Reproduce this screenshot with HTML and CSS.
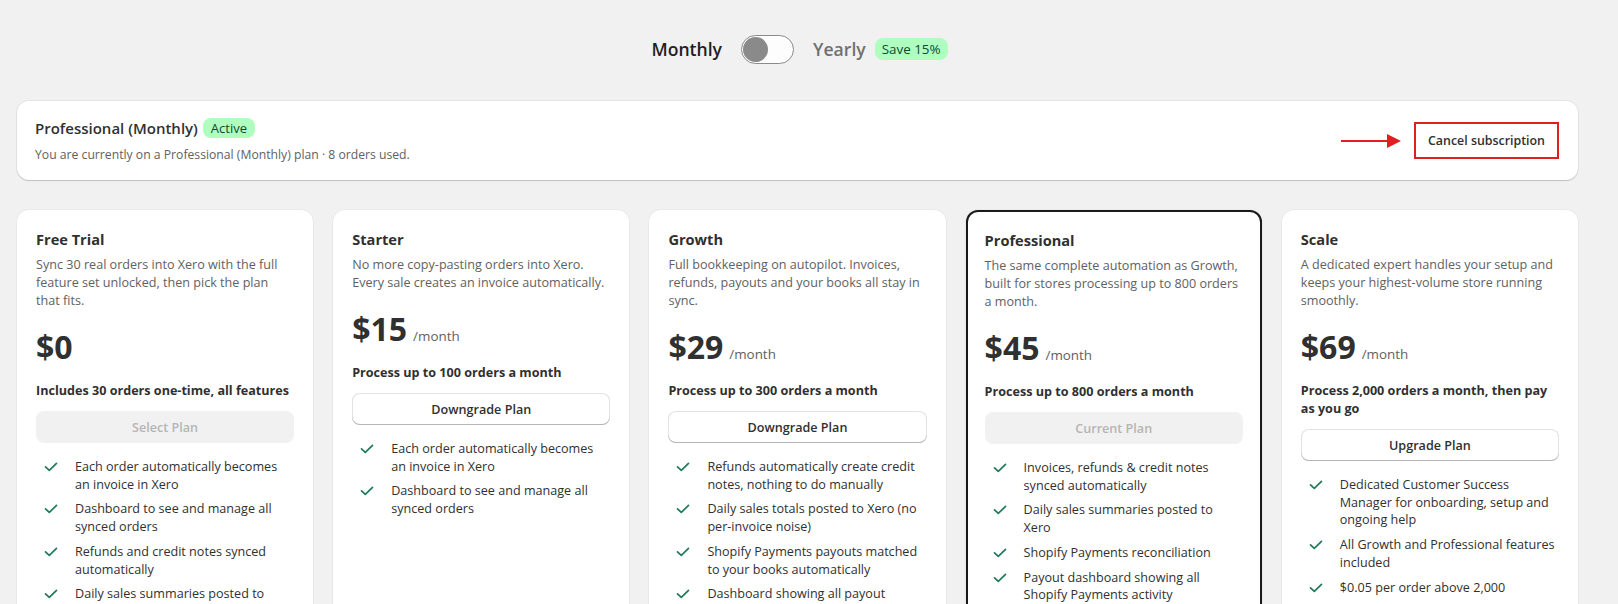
FILE: index.html
```html
<!DOCTYPE html>
<html lang="en">
<head>
    <meta charset="UTF-8">
    <meta name="viewport" content="width=device-width, initial-scale=1.0">
    <title>Plans</title>
    <link rel="stylesheet" href="styles.css">
</head>
<body>
    <div class="page">
        <div class="billing-toggle">
            <span class="period active">Monthly</span>
            <span class="switch"><span class="knob"></span></span>
            <span class="period">Yearly</span>
            <span class="save">Save 15%</span>
        </div>

        <div class="current-plan">
            <div class="current-info">
                <div class="current-title">
                    Professional (Monthly)
                    <span class="badge">Active</span>
                </div>
                <p class="current-sub">You are currently on a Professional (Monthly) plan · 8 orders used.</p>
            </div>
            <div class="current-action">
                <svg class="pointer" width="60" height="16" viewBox="0 0 60 16">
                    <line x1="0" y1="8" x2="48" y2="8" stroke="#e02020" stroke-width="2"/>
                    <polygon points="46,1 60,8 46,15" fill="#e02020"/>
                </svg>
                <button class="cancel-btn">Cancel subscription</button>
            </div>
        </div>

        <div class="plans">
            <div class="plan">
                <h3>Free Trial</h3>
                <p class="desc">Sync 30 real orders into Xero with the full feature set unlocked, then pick the plan that fits.</p>
                <div class="price"><span class="amount">$0</span></div>
                <p class="limit">Includes 30 orders one-time, all features</p>
                <button class="btn disabled">Select Plan</button>
                <ul class="features">
                    <li><svg class="check" viewBox="0 0 14 10"><polyline points="1.5,4.8 5.3,8.4 12.5,1.4"/></svg>Each order automatically becomes an invoice in Xero</li>
                    <li><svg class="check" viewBox="0 0 14 10"><polyline points="1.5,4.8 5.3,8.4 12.5,1.4"/></svg>Dashboard to see and manage all synced orders</li>
                    <li><svg class="check" viewBox="0 0 14 10"><polyline points="1.5,4.8 5.3,8.4 12.5,1.4"/></svg>Refunds and credit notes synced automatically</li>
                    <li><svg class="check" viewBox="0 0 14 10"><polyline points="1.5,4.8 5.3,8.4 12.5,1.4"/></svg>Daily sales summaries posted to Xero</li>
                    <li><svg class="check" viewBox="0 0 14 10"><polyline points="1.5,4.8 5.3,8.4 12.5,1.4"/></svg>Shopify Payments reconciliation</li>
                </ul>
            </div>

            <div class="plan">
                <h3>Starter</h3>
                <p class="desc">No more copy-pasting orders into Xero. Every sale creates an invoice automatically.</p>
                <div class="price"><span class="amount">$15</span><span class="per">/month</span></div>
                <p class="limit">Process up to 100 orders a month</p>
                <button class="btn">Downgrade Plan</button>
                <ul class="features">
                    <li><svg class="check" viewBox="0 0 14 10"><polyline points="1.5,4.8 5.3,8.4 12.5,1.4"/></svg>Each order automatically becomes an invoice in Xero</li>
                    <li><svg class="check" viewBox="0 0 14 10"><polyline points="1.5,4.8 5.3,8.4 12.5,1.4"/></svg>Dashboard to see and manage all synced orders</li>
                </ul>
            </div>

            <div class="plan">
                <h3>Growth</h3>
                <p class="desc">Full bookkeeping on autopilot. Invoices, refunds, payouts and your books all stay in sync.</p>
                <div class="price"><span class="amount">$29</span><span class="per">/month</span></div>
                <p class="limit">Process up to 300 orders a month</p>
                <button class="btn">Downgrade Plan</button>
                <ul class="features">
                    <li><svg class="check" viewBox="0 0 14 10"><polyline points="1.5,4.8 5.3,8.4 12.5,1.4"/></svg>Refunds automatically create credit notes, nothing to do manually</li>
                    <li><svg class="check" viewBox="0 0 14 10"><polyline points="1.5,4.8 5.3,8.4 12.5,1.4"/></svg>Daily sales totals posted to Xero (no per-invoice noise)</li>
                    <li><svg class="check" viewBox="0 0 14 10"><polyline points="1.5,4.8 5.3,8.4 12.5,1.4"/></svg>Shopify Payments payouts matched to your books automatically</li>
                    <li><svg class="check" viewBox="0 0 14 10"><polyline points="1.5,4.8 5.3,8.4 12.5,1.4"/></svg>Dashboard showing all payout activity</li>
                </ul>
            </div>

            <div class="plan current">
                <h3>Professional</h3>
                <p class="desc">The same complete automation as Growth, built for stores processing up to 800 orders a month.</p>
                <div class="price"><span class="amount">$45</span><span class="per">/month</span></div>
                <p class="limit">Process up to 800 orders a month</p>
                <button class="btn disabled">Current Plan</button>
                <ul class="features">
                    <li><svg class="check" viewBox="0 0 14 10"><polyline points="1.5,4.8 5.3,8.4 12.5,1.4"/></svg>Invoices, refunds &amp; credit notes synced automatically</li>
                    <li><svg class="check" viewBox="0 0 14 10"><polyline points="1.5,4.8 5.3,8.4 12.5,1.4"/></svg>Daily sales summaries posted to Xero</li>
                    <li><svg class="check" viewBox="0 0 14 10"><polyline points="1.5,4.8 5.3,8.4 12.5,1.4"/></svg>Shopify Payments reconciliation</li>
                    <li><svg class="check" viewBox="0 0 14 10"><polyline points="1.5,4.8 5.3,8.4 12.5,1.4"/></svg>Payout dashboard showing all Shopify Payments activity</li>
                </ul>
            </div>

            <div class="plan">
                <h3>Scale</h3>
                <p class="desc">A dedicated expert handles your setup and keeps your highest-volume store running smoothly.</p>
                <div class="price"><span class="amount">$69</span><span class="per">/month</span></div>
                <p class="limit">Process 2,000 orders a month, then pay as you go</p>
                <button class="btn">Upgrade Plan</button>
                <ul class="features">
                    <li><svg class="check" viewBox="0 0 14 10"><polyline points="1.5,4.8 5.3,8.4 12.5,1.4"/></svg>Dedicated Customer Success Manager for onboarding, setup and ongoing help</li>
                    <li><svg class="check" viewBox="0 0 14 10"><polyline points="1.5,4.8 5.3,8.4 12.5,1.4"/></svg>All Growth and Professional features included</li>
                    <li><svg class="check" viewBox="0 0 14 10"><polyline points="1.5,4.8 5.3,8.4 12.5,1.4"/></svg>$0.05 per order above 2,000</li>
                </ul>
            </div>
        </div>
    </div>
</body>
</html>
```

FILE: styles.css
```css
* {
    margin: 0;
    padding: 0;
    box-sizing: border-box;
}

body {
    font-family: 'Segoe UI', 'Open Sans', sans-serif;
    font-size: 12.6px;
    color: #303030;
    background: #f1f1f1;
}

.page {
    padding: 34px 40px 0 17px;
}

/* monthly / yearly switch */
.billing-toggle {
    display: flex;
    align-items: center;
    justify-content: center;
    height: 30px;
    padding-left: 4px;
}

.period {
    font-size: 17.6px;
    font-weight: 600;
    color: #707070;
}

.period.active {
    color: #1f1f1f;
}

.switch {
    width: 53px;
    height: 29px;
    margin: 0 19px;
    border: 1px solid #8a8a8a;
    border-radius: 15px;
    background: #fdfdfd;
    padding: 1px;
    display: flex;
    align-items: center;
}

.knob {
    width: 25px;
    height: 25px;
    border-radius: 50%;
    background: #8a8a8a;
}

.save {
    margin-left: 9px;
    padding: 2px 7px;
    font-size: 13.4px;
    color: #0c4a33;
    background: #affebf;
    border-radius: 8px;
}

/* current subscription banner */
.current-plan {
    margin-top: 37px;
    background: white;
    border-radius: 12px;
    box-shadow: 0 1px 1px rgba(0, 0, 0, 0.16), 0 0 0 1px rgba(0, 0, 0, 0.05);
    height: 79px;
    padding: 0 19px 0 18px;
    display: flex;
    align-items: center;
    justify-content: space-between;
}

.current-title {
    font-size: 15px;
    font-weight: 600;
    display: flex;
    align-items: center;
}

.badge {
    margin-left: 5px;
    padding: 1px 8px;
    font-size: 13px;
    font-weight: 400;
    color: #0c4a33;
    background: #affebf;
    border-radius: 8px;
}

.current-sub {
    margin-top: 8px;
    font-size: 12.2px;
    color: #616161;
}

.current-action {
    display: flex;
    align-items: center;
}

.pointer {
    margin-right: 13px;
}

.cancel-btn {
    font: inherit;
    font-size: 12.4px;
    font-weight: 600;
    color: #303030;
    background: white;
    border: 2px solid #e02020;
    height: 37px;
    padding: 0 12px;
}

/* plan cards */
.plans {
    margin-top: 30px;
    display: grid;
    grid-template-columns: repeat(5, 1fr);
    gap: 20px;
    align-items: start;
}

.plan {
    background: white;
    border-radius: 12px;
    padding: 19px;
    min-height: 420px;
    box-shadow: 0 1px 1px rgba(0, 0, 0, 0.07), 0 0 0 1px rgba(0, 0, 0, 0.03);
}

.plan.current {
    border: 2px solid #1a1a1a;
    padding: 18px 17px;
}

.plan h3 {
    font-size: 14.6px;
    line-height: 20px;
    font-weight: 700;
}

.desc {
    margin-top: 7px;
    line-height: 18px;
    color: #616161;
}

.price {
    margin-top: 16px;
    display: flex;
    align-items: baseline;
}

.amount {
    font-size: 32px;
    line-height: 42px;
    font-weight: 700;
}

.per {
    margin-left: 6px;
    font-size: 13.4px;
    color: #616161;
}

.limit {
    margin-top: 14px;
    font-weight: 700;
    line-height: 18px;
}

.btn {
    display: block;
    width: 100%;
    height: 32px;
    margin-top: 11px;
    font: inherit;
    font-weight: 600;
    color: #303030;
    background: white;
    border: none;
    border-radius: 8px;
    box-shadow: inset 0 -1px 0 #b5b5b5, inset 0 0 0 1px #e3e3e3;
}

.btn.disabled {
    background: #f1f1f1;
    color: #b5b5b5;
    box-shadow: none;
}

.features {
    list-style: none;
    margin-top: 15px;
    padding-left: 8px;
}

.features li {
    display: flex;
    line-height: 17.7px;
    margin-bottom: 7px;
}

.check {
    flex: none;
    width: 14px;
    height: 10px;
    margin: 4px 17px 0 0;
    fill: none;
    stroke: #1f7a57;
    stroke-width: 1.7;
    stroke-linecap: round;
    stroke-linejoin: round;
}
```
